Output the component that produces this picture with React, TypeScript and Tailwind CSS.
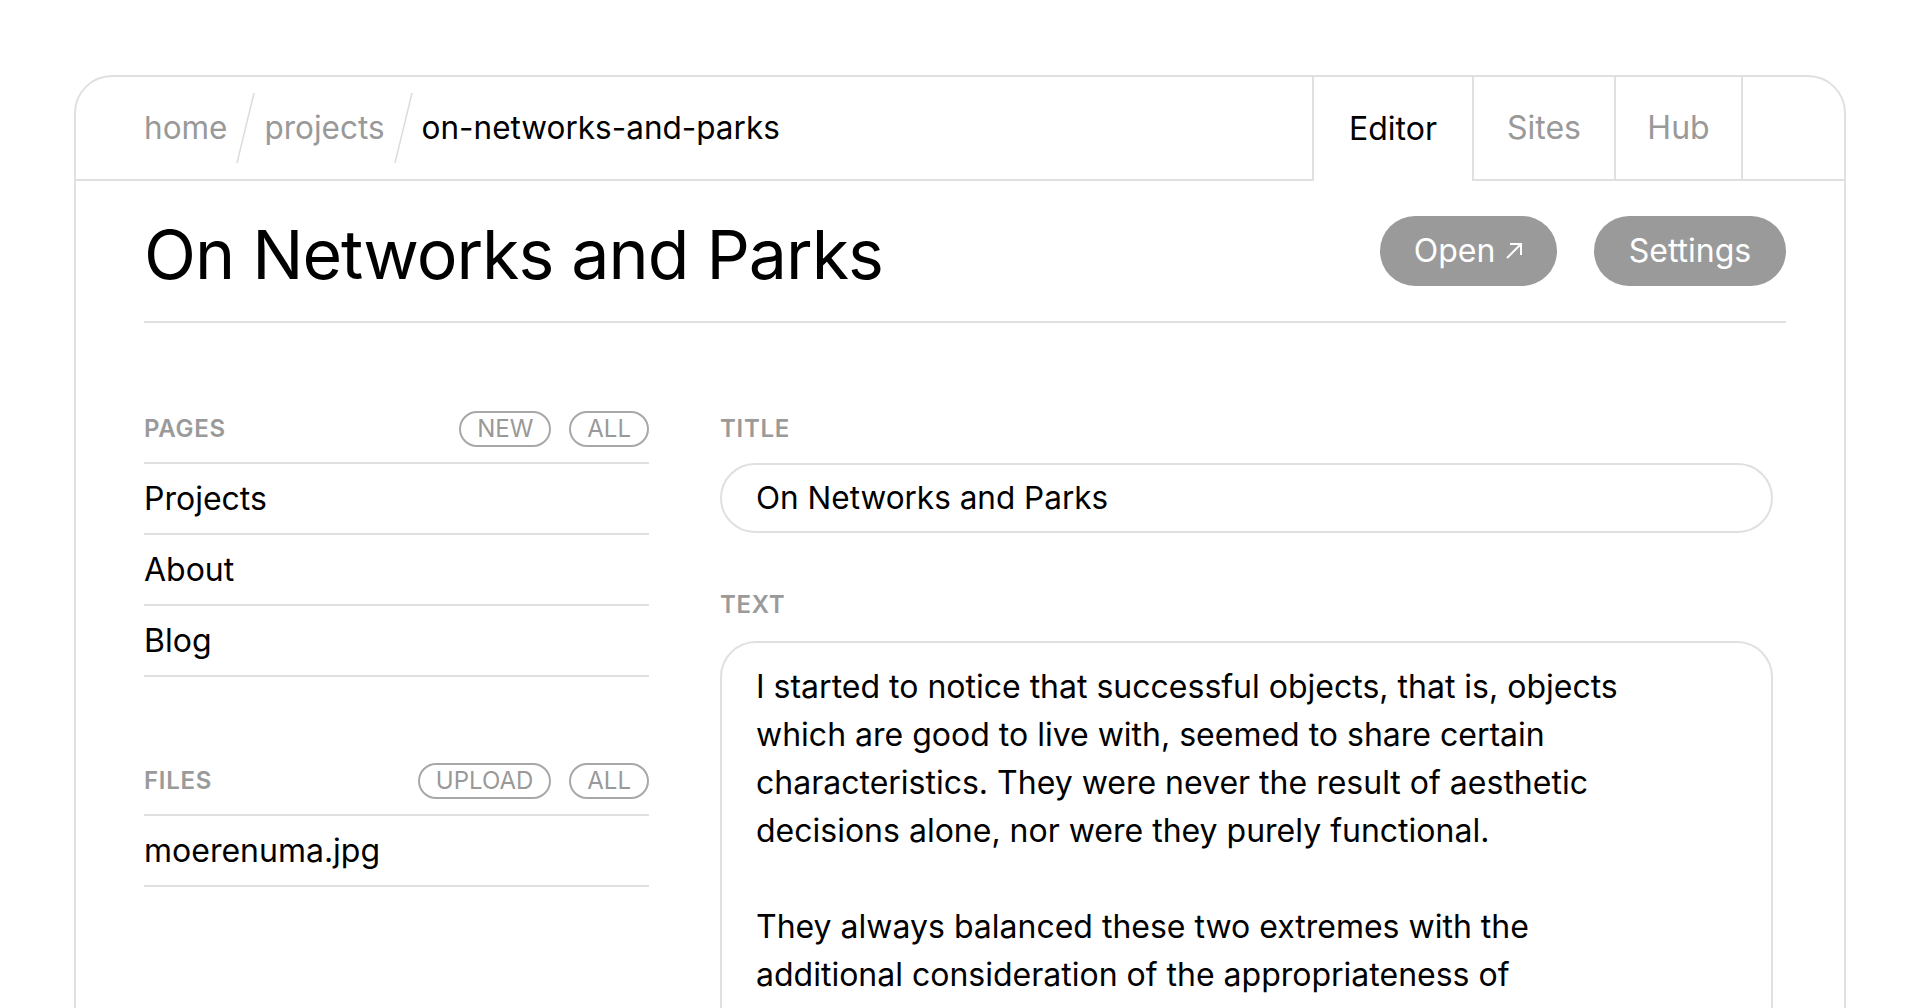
import React from "react";

function Slash() {
  return (
    <svg width="19" height="70" viewBox="0 0 19 70" className="mx-[9px] shrink-0">
      <line x1="18" y1="0" x2="1" y2="70" stroke="#dcdcdc" strokeWidth="1.5" />
    </svg>
  );
}

function Pill({ children }: { children: React.ReactNode }) {
  return (
    <span className="h-[36px] px-[16px] rounded-full border-2 border-[#a8a8a8] text-[#999] text-[24px] leading-none flex items-center uppercase">
      {children}
    </span>
  );
}

function Label({ children }: { children: React.ReactNode }) {
  return (
    <span className="text-[#9a9a9a] text-[24px] font-semibold tracking-[0.03em] uppercase">
      {children}
    </span>
  );
}

export default function App() {
  return (
    <div
      className="h-[1008px] overflow-hidden bg-white pt-[75px] px-[74px] text-black"
      style={{ fontFamily: "Inter, 'Noto Sans', sans-serif" }}
    >
      <div className="border-2 border-[#e0e0e0] rounded-[38px] min-h-[1200px] overflow-hidden">
        {/* header */}
        <div className="flex h-[104px]">
          <div className="flex-1 flex items-center pl-[68px] border-b-2 border-[#e0e0e0] text-[31.5px]">
            <span className="text-[#999]">home</span>
            <Slash />
            <span className="text-[#999]">projects</span>
            <Slash />
            <span>on-networks-and-parks</span>
          </div>
          <div className="w-[160px] border-l-2 border-[#e0e0e0] flex items-center justify-center text-[32px]">
            Editor
          </div>
          <div className="w-[142px] border-l-2 border-b-2 border-[#e0e0e0] flex items-center justify-center text-[32px] text-[#999]">
            Sites
          </div>
          <div className="w-[127px] border-l-2 border-b-2 border-[#e0e0e0] flex items-center justify-center text-[32px] text-[#999]">
            Hub
          </div>
          <div className="w-[103px] border-l-2 border-b-2 border-[#e0e0e0]" />
        </div>

        {/* content */}
        <div className="pl-[68px] pr-[58px]">
          <div className="flex items-center justify-between h-[142px] pt-[35px] pb-[35px] border-b-2 border-[#e0e0e0]">
            <h1 className="text-[68px] leading-none tracking-[-0.015em] font-normal translate-y-[3px]">On Networks and Parks</h1>
            <div className="flex gap-[37px]">
              <button className="h-[70px] w-[177px] rounded-full bg-[#9a9a9a] text-white text-[32px] flex items-center justify-center gap-[10px]">
                <span>Open</span>
                <svg width="18" height="18" viewBox="0 0 18 18" fill="none">
                  <path d="M2 16 L16 2 M5 2 H16 V13" stroke="white" strokeWidth="2" />
                </svg>
              </button>
              <button className="h-[70px] w-[192px] rounded-full bg-[#9a9a9a] text-white text-[32px] flex items-center justify-center">
                Settings
              </button>
            </div>
          </div>

          <div className="flex pt-[88px] gap-[71px]">
            {/* left column */}
            <div className="w-[505px] shrink-0">
              <div className="flex items-center justify-between h-[36px] mb-[15px]">
                <Label>Pages</Label>
                <div className="flex gap-[18px]">
                  <Pill>New</Pill>
                  <Pill>All</Pill>
                </div>
              </div>
              <div className="border-t-2 border-[#e0e0e0]">
                {["Projects", "About", "Blog"].map((p) => (
                  <div key={p} className="h-[71px] flex items-center border-b-2 border-[#e0e0e0] text-[32px]">
                    {p}
                  </div>
                ))}
              </div>

              <div className="flex items-center justify-between h-[36px] mb-[15px] mt-[86px]">
                <Label>Files</Label>
                <div className="flex gap-[18px]">
                  <Pill>Upload</Pill>
                  <Pill>All</Pill>
                </div>
              </div>
              <div className="border-t-2 border-[#e0e0e0]">
                <div className="h-[71px] flex items-center border-b-2 border-[#e0e0e0] text-[32px]">
                  moerenuma.jpg
                </div>
              </div>
            </div>

            {/* right column */}
            <div className="w-[1053px] shrink-0">
              <div className="h-[36px] flex items-center mb-[16px]">
                <Label>Title</Label>
              </div>
              <div className="h-[70px] rounded-full border-2 border-[#e0e0e0] flex items-center px-[34px] text-[31.5px]">
                On Networks and Parks
              </div>
              <div className="h-[36px] flex items-center mt-[54px] mb-[18px]">
                <Label>Text</Label>
              </div>
              <div className="rounded-[36px] border-2 border-[#e0e0e0] pl-[34px] pr-[34px] pt-[20px] pb-[40px] text-[32px] leading-[48px] min-h-[500px]">
                <p>
                  I started to notice that successful objects, that is, objects
                  <br />
                  which are good to live with, seemed to share certain
                  <br />
                  characteristics. They were never the result of aesthetic
                  <br />
                  decisions alone, nor were they purely functional.
                </p>
                <p className="mt-[48px]">
                  They always balanced these two extremes with the
                  <br />
                  additional consideration of the appropriateness of
                  <br />
                  each object to its context and its use.
                </p>
              </div>
            </div>
          </div>
        </div>
      </div>
    </div>
  );
}
